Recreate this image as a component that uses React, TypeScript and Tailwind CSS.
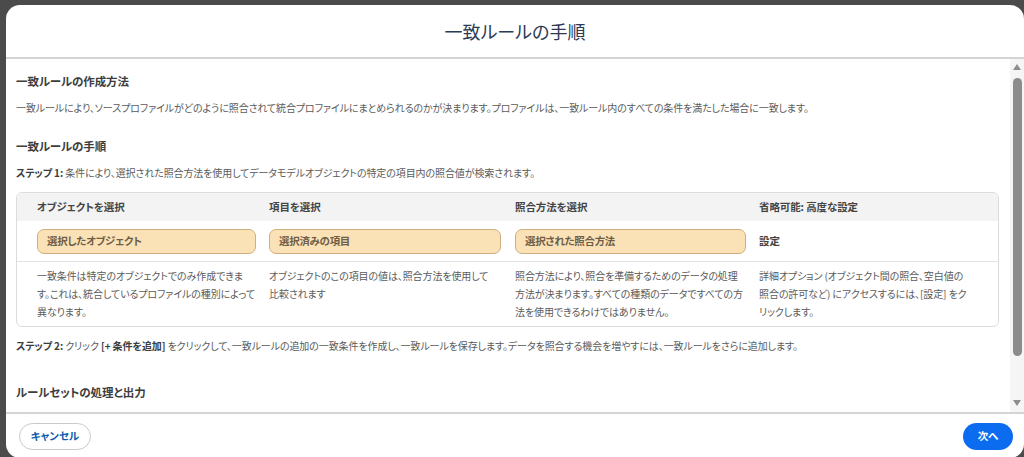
import { type ReactNode } from "react";

const columns = [
  {
    title: "オブジェクトを選択",
    value: "選択したオブジェクト",
    inputWidth: "w-[219px]",
    lines: ["一致条件は特定のオブジェクトでのみ作成できま", "す。これは、統合しているプロファイルの種別によって", "異なります。"],
  },
  {
    title: "項目を選択",
    value: "選択済みの項目",
    inputWidth: "w-[232px]",
    lines: ["オブジェクトのこの項目の値は、照合方法を使用して", "比較されます"],
  },
  {
    title: "照合方法を選択",
    value: "選択された照合方法",
    inputWidth: "w-[231px]",
    lines: ["照合方法により、照合を準備するためのデータの処理", "方法が決まります。すべての種類のデータですべての方", "法を使用できるわけではありません。"],
  },
];

function Heading({ children, className = "" }: { children: ReactNode; className?: string }) {
  return (
    <h3 className={`text-[11.5px] leading-[18px] font-semibold tracking-[-0.1px] text-[#3d3d3d] ${className}`}>
      {children}
    </h3>
  );
}

function Scrollbar() {
  return (
    <div className="flex w-[14px] shrink-0 flex-col items-center bg-[#f5f5f5] pt-[5px] pb-[6px]">
      <div className="h-0 w-0 border-x-[4px] border-b-[6px] border-x-transparent border-b-[#8c8c8c]" />
      <div className="mt-[8px] h-[278px] w-[9px] rounded-full bg-[#8c8c8c]" />
      <div className="flex-1" />
      <div className="h-0 w-0 border-x-[4px] border-t-[6px] border-x-transparent border-t-[#8c8c8c]" />
    </div>
  );
}

function RuleTable() {
  return (
    <div className="mt-[10px] overflow-hidden rounded-[6px] border border-[#dcdcdc]">
      <div className="grid h-[28px] grid-cols-[232px_246px_244px_1fr] items-center bg-[#f3f3f3] pl-[20px] text-[10.5px] font-semibold text-[#444]">
        {columns.map((c) => (
          <div key={c.title}>{c.title}</div>
        ))}
        <div>省略可能: 高度な設定</div>
      </div>
      <div className="grid h-[40px] grid-cols-[232px_246px_244px_1fr] items-center pl-[20px] text-[10.5px]">
        {columns.map((c) => (
          <div
            key={c.value}
            className={`${c.inputWidth} flex h-[25px] items-center rounded-[7px] border border-[#cfae7e] bg-[#fbe2b6] pl-[9px] font-semibold tracking-[-0.3px] text-[#6e5d48]`}
          >
            {c.value}
          </div>
        ))}
        <div className="font-semibold text-[#444]">設定</div>
      </div>
      <div className="grid grid-cols-[232px_246px_244px_1fr] border-t border-[#e3e3e3] py-[5px] pl-[20px] leading-[18px]">
        {columns.map((c) => (
          <div key={c.title} className="whitespace-nowrap">
            {c.lines.map((l) => (
              <div key={l}>{l}</div>
            ))}
          </div>
        ))}
        <div className="whitespace-nowrap">
          <div>詳細オプション (オブジェクト間の照合、空白値の</div>
          <div>照合の許可など) にアクセスするには、[設定] をク</div>
          <div>リックします。</div>
        </div>
      </div>
    </div>
  );
}

export default function App() {
  return (
    <div className="h-[457px] w-[1024px] overflow-hidden bg-[#4b4b4b] pt-[5px] pl-[6px] [font-family:'Noto_Sans_CJK_JP',sans-serif] [font-feature-settings:'palt']">
      <div className="flex h-[453px] w-[1018px] flex-col overflow-hidden rounded-[14px] bg-white">
        <header className="flex h-[54px] shrink-0 items-center justify-center border-b-2 border-[#d4d4d4]">
          <h2 className="text-[18px] text-[#2d3a55]">一致ルールの手順</h2>
        </header>

        <div className="flex min-h-0 flex-1">
          <div className="min-w-0 flex-1 overflow-hidden pt-[13px] pr-[11px] pl-[10px] text-[10px] leading-[18px] tracking-[-0.1px] text-[#5b5b5b]">
            <Heading>一致ルールの作成方法</Heading>
            <p className="mt-[9px]">
              一致ルールにより、ソースプロファイルがどのように照合されて統合プロファイルにまとめられるのかが決まります。プロファイルは、一致ルール内のすべての条件を満たした場合に一致します。
            </p>

            <Heading className="mt-[20px]">一致ルールの手順</Heading>
            <p className="mt-[9px]">
              <span className="font-semibold text-[#3d3d3d]">ステップ 1:</span>{" "}
              条件により、選択された照合方法を使用してデータモデルオブジェクトの特定の項目内の照合値が検索されます。
            </p>

            <RuleTable />

            <p className="mt-[10px]">
              <span className="font-semibold text-[#3d3d3d]">ステップ 2:</span> クリック{" "}
              <span className="font-semibold text-[#3d3d3d]">[+ 条件を追加]</span>{" "}
              をクリックして、一致ルールの追加の一致条件を作成し、一致ルールを保存します。データを照合する機会を増やすには、一致ルールをさらに追加します。
            </p>

            <Heading className="mt-[28px]">ルールセットの処理と出力</Heading>
          </div>
          <Scrollbar />
        </div>

        <footer className="flex h-[46px] shrink-0 items-center justify-between border-t-2 border-[#d4d4d4] pr-[11px] pl-[13px]">
          <button className="h-[27px] w-[72px] rounded-full border border-[#c9c9c9] text-[10.5px] font-bold text-[#0b5cab]">
            キャンセル
          </button>
          <button className="h-[27px] w-[50px] rounded-full bg-[#0b6cf0] text-[10.5px] font-bold text-white">次へ</button>
        </footer>
      </div>
    </div>
  );
}
